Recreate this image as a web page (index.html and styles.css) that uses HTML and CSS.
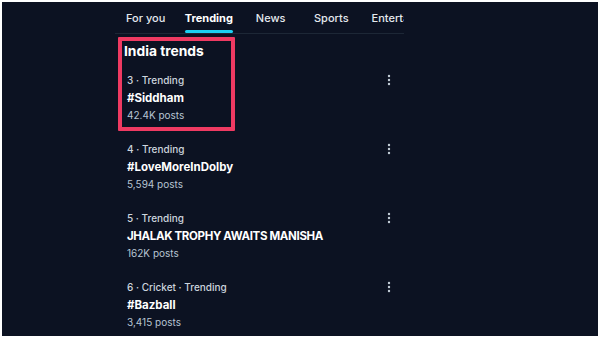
FILE: index.html
```html
<!DOCTYPE html>
<html>
<head>
<meta charset="utf-8">
<link rel="stylesheet" href="styles.css">
</head>
<body>
<div class="frame">
  <div class="column">
    <nav class="tabs">
      <span class="tab t1">For you</span>
      <span class="tab t2 active">Trending</span>
      <span class="tab t3">News</span>
      <span class="tab t4">Sports</span>
      <span class="tab t5">Entertainment</span>
    </nav>
    <h2 class="heading">India trends</h2>
    <div class="item">
      <div class="meta">3 · Trending</div>
      <div class="name">#Siddham</div>
      <div class="posts">42.4K posts</div>
      <svg class="more" width="4" height="12" viewBox="0 0 4 12"><circle cx="2" cy="2" r="1.2"/><circle cx="2" cy="6" r="1.2"/><circle cx="2" cy="10" r="1.2"/></svg>
    </div>
    <div class="item">
      <div class="meta">4 · Trending</div>
      <div class="name">#LoveMoreInDolby</div>
      <div class="posts">5,594 posts</div>
      <svg class="more" width="4" height="12" viewBox="0 0 4 12"><circle cx="2" cy="2" r="1.2"/><circle cx="2" cy="6" r="1.2"/><circle cx="2" cy="10" r="1.2"/></svg>
    </div>
    <div class="item">
      <div class="meta">5 · Trending</div>
      <div class="name upper">JHALAK TROPHY AWAITS MANISHA</div>
      <div class="posts">162K posts</div>
      <svg class="more" width="4" height="12" viewBox="0 0 4 12"><circle cx="2" cy="2" r="1.2"/><circle cx="2" cy="6" r="1.2"/><circle cx="2" cy="10" r="1.2"/></svg>
    </div>
    <div class="item">
      <div class="meta">6 · Cricket · Trending</div>
      <div class="name">#Bazball</div>
      <div class="posts">3,415 posts</div>
      <svg class="more" width="4" height="12" viewBox="0 0 4 12"><circle cx="2" cy="2" r="1.2"/><circle cx="2" cy="6" r="1.2"/><circle cx="2" cy="10" r="1.2"/></svg>
    </div>
    <div class="highlight"></div>
  </div>
</div>
</body>
</html>
```

FILE: styles.css
```css
html, body {
  margin: 0;
  padding: 0;
  background: #ffffff;
}
.frame {
  margin: 2px;
  height: 334px;
  background: #0c1222;
  overflow: hidden;
  font-family: Inter, "Noto Sans", sans-serif;
  color: #e7ecf1;
}
.column {
  position: relative;
  margin-left: 113px;
  width: 289px;
}
.tabs {
  display: flex;
  height: 31px;
  border-bottom: 1px solid #1d2736;
  overflow: hidden;
  white-space: nowrap;
}
.tab {
  position: relative;
  display: flex;
  align-items: center;
  font-size: 11px;
  font-weight: 500;
  color: #e4e9ee;
  flex: none;
}
.t1 { margin-left: 11px; }
.t2 { margin-left: 19.5px; }
.t3 { margin-left: 23px; }
.t4 { margin-left: 28.5px; }
.t5 { margin-left: 23px; }
.tab.active {
  font-weight: 700;
  color: #ffffff;
}
.tab.active::after {
  content: "";
  position: absolute;
  left: 0;
  right: 0;
  bottom: 0;
  height: 3px;
  border-radius: 2px;
  background: #1cd0f2;
}
.heading {
  margin: 7px 0 0 9px;
  font-size: 13.8px;
  line-height: 20px;
  font-weight: 700;
  color: #ffffff;
}
.item {
  position: relative;
  padding: 11px 0 7px 12px;
}
.meta {
  font-size: 10px;
  line-height: 16px;
  font-weight: 500;
  color: #cdd5de;
}
.name {
  margin-top: 1px;
  font-size: 11.5px;
  line-height: 18px;
  font-weight: 700;
  color: #ffffff;
}
.name.upper {
  letter-spacing: -0.35px;
}
.posts {
  font-size: 10px;
  line-height: 16px;
  color: #b7c4d2;
}
.more {
  position: absolute;
  right: 13px;
  top: 13px;
  fill: #c3cdd8;
}
.highlight {
  position: absolute;
  left: 3px;
  top: 35px;
  width: 109px;
  height: 86px;
  border: 4px solid #ef3a62;
  border-radius: 1px;
  pointer-events: none;
}
```
